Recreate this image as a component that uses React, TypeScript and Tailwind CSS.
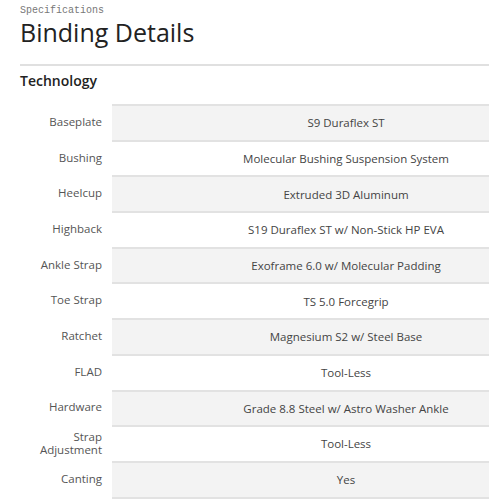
import React from "react";

const specs: { label: string; value: string }[] = [
  { label: "Baseplate", value: "S9 Duraflex ST" },
  { label: "Bushing", value: "Molecular Bushing Suspension System" },
  { label: "Heelcup", value: "Extruded 3D Aluminum" },
  { label: "Highback", value: "S19 Duraflex ST w/ Non-Stick HP EVA" },
  { label: "Ankle Strap", value: "Exoframe 6.0 w/ Molecular Padding" },
  { label: "Toe Strap", value: "TS 5.0 Forcegrip" },
  { label: "Ratchet", value: "Magnesium S2 w/ Steel Base" },
  { label: "FLAD", value: "Tool-Less" },
  { label: "Hardware", value: "Grade 8.8 Steel w/ Astro Washer Ankle" },
  { label: "Strap Adjustment", value: "Tool-Less" },
  { label: "Canting", value: "Yes" },
];

export default function App() {
  return (
    <div className="w-[500px] h-[500px] overflow-hidden bg-white font-['Open_Sans',sans-serif]">
      <div className="pl-5 pr-[11px]">
        <p className="font-['Liberation_Mono',monospace] text-[10px] leading-[12px] pt-[5px] text-[#777]">
          Specifications
        </p>
        <h1 className="mt-[1px] text-[25px] leading-[28px] font-medium text-[#222]">
          Binding Details
        </h1>
        <div className="mt-[18px] h-[2px] bg-[#e0e0e0]" />
        <h2 className="mt-[6px] text-[14px] leading-[18px] font-semibold text-[#222]">
          Technology
        </h2>
        <div className="mt-[14px]">
          {specs.map((s, i) => (
            <div key={s.label} className="flex h-[35.7px]">
              <div className="w-[92px] pr-[10px] flex flex-col items-end justify-center text-right text-[11.5px] leading-[12px] text-[#555]">
                {s.label === "Strap Adjustment" ? (
                  <>
                    <span className="block leading-[13px]">Strap</span>
                    <span className="block leading-[13px]">Adjustment</span>
                  </>
                ) : (
                  <span>{s.label}</span>
                )}
              </div>
              <div
                className={
                  "flex-1 border-t-2 border-[#e2e2e2] flex items-center justify-center pl-[91px] text-[11.5px] text-[#444] whitespace-nowrap " +
                  (i % 2 === 0 ? "bg-[#f3f3f3]" : "bg-white")
                }
              >
                {s.value}
              </div>
            </div>
          ))}
          <div className="ml-[92px] h-[2px] bg-[#e2e2e2]" />
        </div>
      </div>
    </div>
  );
}
